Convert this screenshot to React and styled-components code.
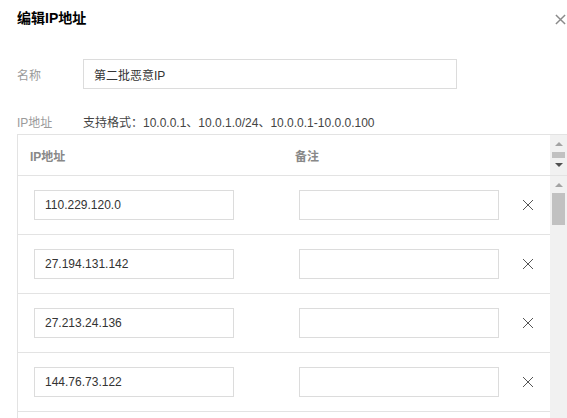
import React from 'react'
import styled, { createGlobalStyle } from 'styled-components'

const rows = [
    { ip: '110.229.120.0', note: '' },
    { ip: '27.194.131.142', note: '' },
    { ip: '27.213.24.136', note: '' },
    { ip: '144.76.73.122', note: '' },
    { ip: '', note: '' },
]

function CloseIcon({ size, color, width }) {
    return (
        <svg width={size} height={size} viewBox="0 0 12 12" fill="none">
            <path d="M1 1L11 11M11 1L1 11" stroke={color} strokeWidth={width} />
        </svg>
    )
}

function Scroller({ head, thumb }) {
    return (
        <ScrollTrack>
            <ArrowUp />
            <Thumb $h={thumb} />
            {head && <ArrowDown />}
        </ScrollTrack>
    )
}

export default function App() {
    return (
        <Page>
            <GlobalStyle />
            <Dialog>
                <TitleBar>
                    <Title>编辑IP地址</Title>
                    <CloseButton>
                        <CloseIcon size={11} color="#8a8a8a" width={1.6} />
                    </CloseButton>
                </TitleBar>

                <NameRow>
                    <Label>名称</Label>
                    <TextInput $w={374} value="第二批恶意IP" readOnly />
                </NameRow>

                <HintRow>
                    <Label>IP地址</Label>
                    <Hint>支持格式：10.0.0.1、10.0.1.0/24、10.0.0.1-10.0.0.100</Hint>
                </HintRow>

                <Table>
                    <TableHead>
                        <Columns>
                            <HeadCell>IP地址</HeadCell>
                            <HeadCell>备注</HeadCell>
                            <HeadCell />
                        </Columns>
                        <Scroller head thumb={6} />
                    </TableHead>
                    <TableBody>
                        <Rows>
                            {rows.map((r, i) => (
                                <Columns key={i} $row>
                                    <BodyCell>
                                        <TextInput $w={200} value={r.ip} readOnly />
                                    </BodyCell>
                                    <BodyCell>
                                        <TextInput $w={200} value={r.note} readOnly />
                                    </BodyCell>
                                    <ActionCell>
                                        <CloseIcon size={12} color="#555" width={1} />
                                    </ActionCell>
                                </Columns>
                            ))}
                        </Rows>
                        <Scroller thumb={32} />
                    </TableBody>
                </Table>
            </Dialog>
        </Page>
    )
}

const GlobalStyle = createGlobalStyle`
    body {
        margin: 0;
        background: #fff;
        font-family: "Liberation Sans", "Noto Sans CJK SC", sans-serif;
    }
`

const Page = styled.div`
    width: 567px;
    height: 418px;
    overflow: hidden;
    background: #fff;
`

const Dialog = styled.div`
    width: 585px;
    padding: 0 17px;
    box-sizing: border-box;
`

const TitleBar = styled.div`
    display: flex;
    align-items: center;
    justify-content: space-between;
    padding-top: 8px;
    height: 20px;
`

const Title = styled.h2`
    margin: 0;
    font-size: 14px;
    font-weight: bold;
    line-height: 20px;
    color: #000;
`

const CloseButton = styled.div`
    width: 16px;
    height: 20px;
    display: flex;
    align-items: center;
    justify-content: center;
    margin-top: 2px;
`

const NameRow = styled.div`
    display: flex;
    align-items: center;
    margin-top: 31px;
`

const HintRow = styled.div`
    display: flex;
    align-items: center;
    height: 20px;
    margin-top: 22px;
    margin-bottom: 3px;
`

const Label = styled.span`
    width: 66px;
    flex-shrink: 0;
    font-size: 12px;
    color: #9a9a9a;
`

const Hint = styled.span`
    font-size: 12px;
    color: #444;
    white-space: nowrap;
`

const TextInput = styled.input`
    width: ${p => p.$w}px;
    height: 30px;
    box-sizing: border-box;
    border: 1px solid #dcdcdc;
    padding: 0 10px;
    font: 12px "Liberation Sans", "Noto Sans CJK SC", sans-serif;
    color: #333;
    outline: none;
    background: #fff;
`

const Table = styled.div`
    width: 551px;
    border: 1px solid #e3e3e3;
    box-sizing: border-box;
`

const TableHead = styled.div`
    display: flex;
    height: 40px;
    border-bottom: 1px solid #e3e3e3;
`

const TableBody = styled.div`
    display: flex;
    height: 300px;
`

const Rows = styled.div`
    width: 532px;
`

const Columns = styled.div`
    display: grid;
    grid-template-columns: 265px 222px 45px;
    width: 532px;
    height: ${p => (p.$row ? '59px' : 'auto')};
    box-sizing: border-box;
    border-bottom: ${p => (p.$row ? '1px solid #e3e3e3' : 'none')};
`

const HeadCell = styled.div`
    display: flex;
    align-items: center;
    padding-left: 12px;
    font-size: 12px;
    font-weight: bold;
    color: #888;
`

const BodyCell = styled.div`
    display: flex;
    align-items: center;
    padding-left: 16px;
    padding-bottom: 1px;
`

const ActionCell = styled.div`
    display: flex;
    align-items: center;
    justify-content: center;
    padding-bottom: 1px;
`

const ScrollTrack = styled.div`
    width: 17px;
    flex-shrink: 0;
    background: #f1f1f1;
    display: flex;
    flex-direction: column;
    align-items: center;
    padding-top: 7px;
    box-sizing: border-box;
`

const ArrowUp = styled.div`
    width: 0;
    height: 0;
    border-left: 4px solid transparent;
    border-right: 4px solid transparent;
    border-bottom: 4px solid #a3a3a3;
`

const ArrowDown = styled.div`
    width: 0;
    height: 0;
    margin-top: 5px;
    border-left: 4px solid transparent;
    border-right: 4px solid transparent;
    border-top: 4px solid #505050;
`

const Thumb = styled.div`
    width: 13px;
    height: ${p => p.$h}px;
    margin-top: 6px;
    background: #c1c1c1;
`
